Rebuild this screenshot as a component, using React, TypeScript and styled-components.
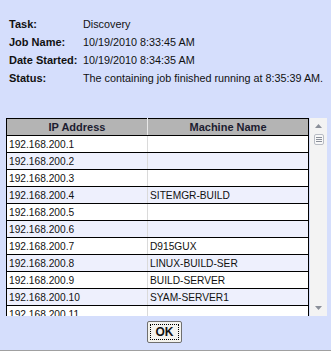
import React from 'react';
import styled, { createGlobalStyle } from 'styled-components';

interface Machine {
  ip: string;
  name: string;
}

const machines: Machine[] = [
  { ip: '192.168.200.1', name: '' },
  { ip: '192.168.200.2', name: '' },
  { ip: '192.168.200.3', name: '' },
  { ip: '192.168.200.4', name: 'SITEMGR-BUILD' },
  { ip: '192.168.200.5', name: '' },
  { ip: '192.168.200.6', name: '' },
  { ip: '192.168.200.7', name: 'D915GUX' },
  { ip: '192.168.200.8', name: 'LINUX-BUILD-SER' },
  { ip: '192.168.200.9', name: 'BUILD-SERVER' },
  { ip: '192.168.200.10', name: 'SYAM-SERVER1' },
  { ip: '192.168.200.11', name: '' },
];

const details = [
  { label: 'Task:', value: 'Discovery' },
  { label: 'Job Name:', value: '10/19/2010 8:33:45 AM' },
  { label: 'Date Started:', value: '10/19/2010 8:34:35 AM' },
  { label: 'Status:', value: 'The containing job finished running at 8:35:39 AM.' },
];

const App: React.FC = () => {
  return (
    <Page>
      <GlobalStyle />
      <Details>
        {details.map((d) => (
          <React.Fragment key={d.label}>
            <Label>{d.label}</Label>
            <Value>{d.value}</Value>
          </React.Fragment>
        ))}
      </Details>
      <ListBox>
        <Viewport>
          <Table>
            <thead>
              <tr>
                <HeadCell>IP Address</HeadCell>
                <HeadCell>Machine Name</HeadCell>
              </tr>
            </thead>
            <tbody>
              {machines.map((m, i) => (
                <Row key={m.ip} $alt={i % 2 === 1}>
                  <Cell>{m.ip}</Cell>
                  <Cell>{m.name}</Cell>
                </Row>
              ))}
            </tbody>
          </Table>
        </Viewport>
        <ScrollBar>
          <Arrow viewBox="0 0 7 4">
            <path d="M0 4 L3.5 0 L7 4 Z" fill="#8a8f99" />
          </Arrow>
          <Thumb>
            <Grip viewBox="0 0 6 5">
              <path d="M0 0.5 H6 M0 2.5 H6 M0 4.5 H6" stroke="#8a8f99" strokeWidth="1" />
            </Grip>
          </Thumb>
          <Track />
          <Arrow viewBox="0 0 7 4">
            <path d="M0 0 L3.5 4 L7 0 Z" fill="#8a8f99" />
          </Arrow>
        </ScrollBar>
      </ListBox>
      <Footer>
        <OkButton>
          <Focus>OK</Focus>
        </OkButton>
      </Footer>
    </Page>
  );
};

export default App;

const GlobalStyle = createGlobalStyle`
  html, body {
    margin: 0;
    padding: 0;
    background: #ffffff;
  }
`;

const Page = styled.div`
  width: 331px;
  height: 351px;
  box-sizing: border-box;
  background: #d5defc;
  border-bottom: 1px solid #a0a0a0;
  font-family: 'Liberation Sans', Arial, sans-serif;
  color: #111;
  display: flex;
  flex-direction: column;
  padding-top: 15px;
`;

const Details = styled.div`
  display: grid;
  grid-template-columns: 74px auto;
  padding-left: 9px;
  font-size: 10.8px;
  line-height: 18px;
`;

const Label = styled.div`
  font-weight: bold;
  font-size: 11px;
`;

const Value = styled.div`
  white-space: nowrap;
`;

const ListBox = styled.div`
  margin: 31px 0 0 6px;
  display: flex;
  height: 198px;
`;

const Viewport = styled.div`
  width: 303px;
  height: 198px;
  overflow: hidden;
`;

const Table = styled.table`
  width: 303px;
  border-collapse: collapse;
  font-size: 10.2px;
  table-layout: fixed;
`;

const HeadCell = styled.th`
  height: 16px;
  padding: 0;
  background: #b4b4b4;
  border: 1px solid #000;
  border-left-color: #e8e8e8;
  border-right-color: #e8e8e8;
  font-weight: bold;
  font-size: 11px;
  color: #1c1c30;
  text-align: center;
  &:first-child {
    width: 140px;
    border-left-color: #000;
  }
  &:last-child {
    border-right-color: #000;
  }
`;

const Row = styled.tr<{ $alt: boolean }>`
  background: ${({ $alt }) => ($alt ? '#eef0fd' : '#ffffff')};
`;

const Cell = styled.td`
  height: 16px;
  padding: 0 0 0 2px;
  border: 1px solid #000;
  border-left-color: #dadada;
  border-right-color: #dadada;
  white-space: nowrap;
  overflow: hidden;
  color: #111;
  &:first-child {
    border-left-color: #000;
  }
  &:last-child {
    border-right-color: #000;
  }
`;

const ScrollBar = styled.div`
  width: 17px;
  margin-left: 1px;
  background: #f3f3f3;
  display: flex;
  flex-direction: column;
  align-items: center;
`;

const Arrow = styled.svg`
  width: 7px;
  height: 4px;
  margin: 6px 0;
  flex: none;
`;

const Thumb = styled.div`
  width: 10px;
  height: 11px;
  box-sizing: border-box;
  border: 1px solid #b8bcc4;
  border-radius: 2px;
  background: #f8f8f8;
  display: flex;
  align-items: center;
  justify-content: center;
`;

const Grip = styled.svg`
  width: 6px;
  height: 5px;
`;

const Track = styled.div`
  flex: 1;
`;

const Footer = styled.div`
  display: flex;
  justify-content: center;
  padding-top: 5px;
  padding-right: 2px;
`;

const OkButton = styled.button`
  width: 35px;
  height: 22px;
  padding: 2px;
  box-sizing: border-box;
  border: 1px solid #6f6f6f;
  border-radius: 2px;
  background: #f4f3ee;
  font-family: 'Liberation Sans', Arial, sans-serif;
  font-weight: bold;
  font-size: 12px;
  color: #111;
  display: flex;
`;

const Focus = styled.span`
  flex: 1;
  border: 1px dotted #000;
  display: flex;
  align-items: center;
  justify-content: center;
`;
